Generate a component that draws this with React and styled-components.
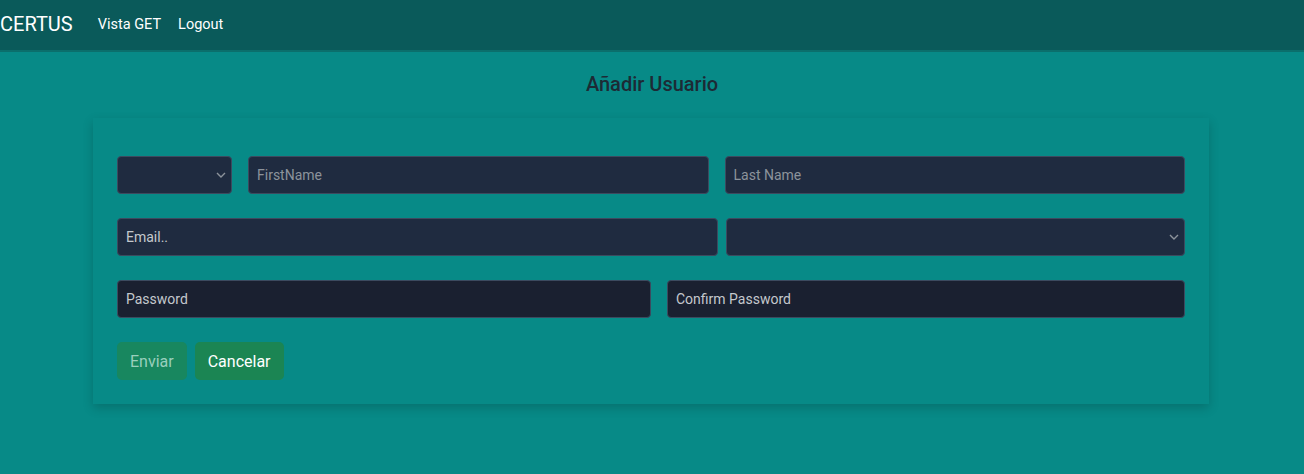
import React from "react";
import styled, { createGlobalStyle } from "styled-components";

const GlobalStyle = createGlobalStyle`
  * { box-sizing: border-box; }
  body {
    margin: 0;
    font-family: Roboto, "Liberation Sans", sans-serif;
    background: #078a87;
  }
`;

const App = () => {
  return (
    <Page>
      <GlobalStyle />
      <NavBar>
        <Brand>CERTUS</Brand>
        <NavLink>Vista GET</NavLink>
        <NavLink>Logout</NavLink>
      </NavBar>

      <Title>Añadir Usuario</Title>

      <Card>
        <Row>
          <Select $w="115px">
            <option value=""></option>
          </Select>
          <Input placeholder="FirstName" />
          <Input placeholder="Last Name" />
        </Row>

        <Row $gap="8px">
          <Input placeholder="Email.." $light $w="601px" />
          <Select $w="459px">
            <option value=""></option>
          </Select>
        </Row>

        <Row>
          <Input type="password" placeholder="Password" $light $dark $w="534px" />
          <Input type="password" placeholder="Confirm Password" $light $dark $w="518px" />
        </Row>

        <Buttons>
          <Button disabled>Enviar</Button>
          <Button>Cancelar</Button>
        </Buttons>
      </Card>
    </Page>
  );
};

export default App;

const Page = styled.div`
  min-height: 474px;
  background: #078a87;
`;

const NavBar = styled.nav`
  display: flex;
  align-items: center;
  height: 52px;
  padding-bottom: 2px;
  background: #0a5a5a;
  border-bottom: 2px solid #0b6f6c;
`;

const Brand = styled.span`
  font-size: 20px;
  color: #ffffff;
  margin-right: 25px;
`;

const NavLink = styled.a`
  font-size: 14.5px;
  font-weight: 400;
  color: #ffffff;
  margin-right: 17px;
  cursor: pointer;
`;

const Title = styled.h2`
  margin: 20px 0 0;
  text-align: center;
  font-size: 20px;
  font-weight: 500;
  color: #1d2a35;
  line-height: 24px;
`;

const Card = styled.div`
  margin: 22px 93px 0 93px;
  width: 1116px;
  padding: 38px 24px 24px;
  background: #078a87;
  box-shadow: 0 4px 10px rgba(0, 0, 0, 0.18);
  display: flex;
  flex-direction: column;
  gap: 24px;
`;

const Row = styled.div`
  display: flex;
  gap: ${({ $gap }) => $gap || "16px"};
`;

const Input = styled.input`
  ${({ $w }) => ($w ? `flex: 0 0 ${$w};` : "flex: 1 1 0;")}
  min-width: 0;
  height: 38px;
  padding: 0 8px;
  background: ${({ $dark }) => ($dark ? "#1a2030" : "#1f2b40")};
  border: 1px solid #3c4a5f;
  border-radius: 4px;
  font-family: Roboto, "Liberation Sans", sans-serif;
  font-size: 14px;
  color: #e5e7eb;
  &::placeholder {
    color: ${({ $light }) => ($light ? "#c4c8cd" : "#8c939b")};
  }
  &:focus {
    outline: none;
  }
`;

const Select = styled.select`
  ${({ $w }) => ($w ? `flex: 0 0 ${$w};` : "flex: 1 1 0;")}
  min-width: 0;
  height: 38px;
  padding: 0 8px;
  appearance: none;
  background-color: #1f2b40;
  background-image: url("data:image/svg+xml,%3Csvg xmlns='http://www.w3.org/2000/svg' width='10' height='6' viewBox='0 0 10 6'%3E%3Cpath d='M1 1l4 4 4-4' fill='none' stroke='%238c939b' stroke-width='1.4'/%3E%3C/svg%3E");
  background-repeat: no-repeat;
  background-position: right 5px center;
  border: 1px solid #3c4a5f;
  border-radius: 4px;
  color: #e5e7eb;
  &:focus {
    outline: none;
  }
`;

const Buttons = styled.div`
  display: flex;
  gap: 8px;
`;

const Button = styled.button`
  height: 38px;
  padding: 0 13px;
  border: none;
  border-radius: 5px;
  background: #1b8553;
  color: #ffffff;
  font-family: Roboto, "Liberation Sans", sans-serif;
  font-size: 16px;
  cursor: pointer;
  &:disabled {
    background: #18875f;
    color: #9acfbd;
    cursor: default;
  }
`;
